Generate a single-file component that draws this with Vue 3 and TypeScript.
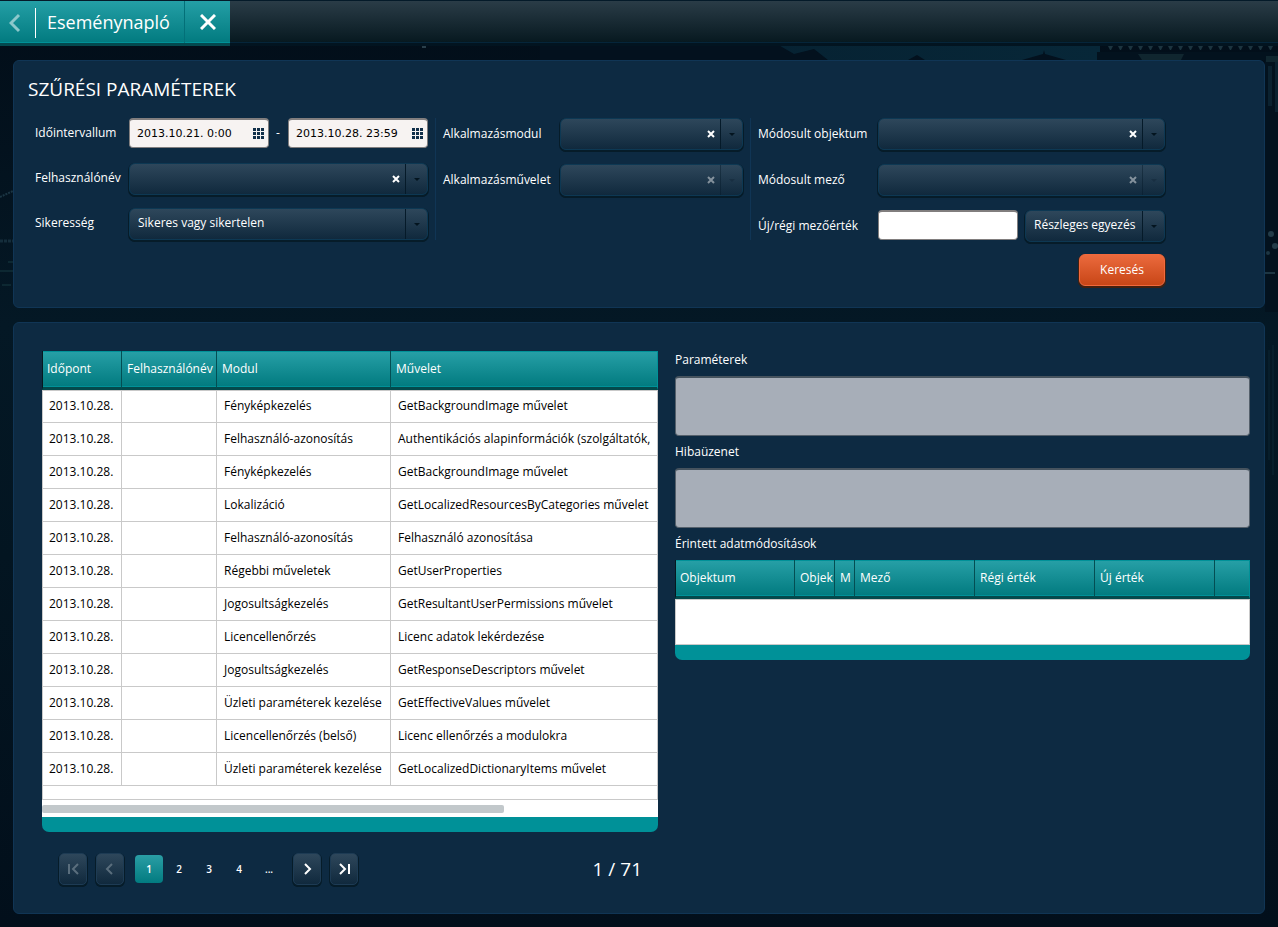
<script setup lang="ts">
import { ref } from 'vue'

interface LogEntry {
  time: string
  user: string
  module: string
  operation: string
}

const dateFrom = ref('2013.10.21. 0:00')
const dateTo = ref('2013.10.28. 23:59')
const user = ref('')
const success = ref('Sikeres vagy sikertelen')
const appModule = ref('')
const appOperation = ref('')
const changedObject = ref('')
const changedField = ref('')
const fieldValue = ref('')
const matchMode = ref('Részleges egyezés')
const parameters = ref('')
const errorMessage = ref('')

const day = '2013.10.28.'
const rows: LogEntry[] = [
  ['Fényképkezelés', 'GetBackgroundImage művelet'],
  ['Felhasználó-azonosítás', 'Authentikációs alapinformációk (szolgáltatók,'],
  ['Fényképkezelés', 'GetBackgroundImage művelet'],
  ['Lokalizáció', 'GetLocalizedResourcesByCategories művelet'],
  ['Felhasználó-azonosítás', 'Felhasználó azonosítása'],
  ['Régebbi műveletek', 'GetUserProperties'],
  ['Jogosultságkezelés', 'GetResultantUserPermissions művelet'],
  ['Licencellenőrzés', 'Licenc adatok lekérdezése'],
  ['Jogosultságkezelés', 'GetResponseDescriptors művelet'],
  ['Üzleti paraméterek kezelése', 'GetEffectiveValues művelet'],
  ['Licencellenőrzés (belső)', 'Licenc ellenőrzés a modulokra'],
  ['Üzleti paraméterek kezelése', 'GetLocalizedDictionaryItems művelet'],
].map(([module, operation]) => ({ time: day, user: '', module, operation }))

const changeColumns = ['Objektum', 'Objek', 'M', 'Mező', 'Régi érték', 'Új érték', '']
const pages = ['1', '2', '3', '4', '...']
const page = ref('1')
const pageCount = 71
const gridCells = [0, 4, 8]
const rafters = Array.from({ length: 18 }, (_, i) => 1108 + i * 10)
</script>

<template>
  <div class="app">
    <svg class="backdrop" width="1278" height="927" viewBox="0 0 1278 927" aria-hidden="true">
      <defs>
        <linearGradient id="sky" x1="0" x2="1" y1="0" y2="0">
          <stop offset="0" stop-color="#020d1a" />
          <stop offset="0.25" stop-color="#062131" />
          <stop offset="1" stop-color="#072738" />
        </linearGradient>
      </defs>
      <rect x="540" y="40" width="560" height="24" fill="url(#sky)" />
      <path d="M540 40h230l24 14 20-5 14 11H540zM908 60l9-5 8 5zM1022 60l14-4 7-2 1-4 1 4 7 2 14 4z" fill="#03111e" />
      <path d="M1097 52h181v260h-13V60H1097z" fill="#03121e" />
      <path d="M1138 54h46l-3 6h-39zM1266 56h12v6h-12z" fill="#10262f" />
      <path v-for="x in rafters" :key="x" :d="`M${x} 46h5l-2 4h-1z`" fill="#1c343f" />
      <path d="M1268 66h4v40h-4zM1275 62h3v50h-3z" fill="#0b2230" />
      <circle cx="1271" cy="234" r="3" fill="#233c49" />
      <circle cx="1275" cy="246" r="3" fill="#233c49" />
      <circle cx="1268" cy="253" r="2" fill="#1d3643" />
      <path d="M1265 273h10" stroke="#1d3643" stroke-width="2" />
      <path d="M0 197l13-6" stroke="#1b3543" stroke-width="2" stroke-dasharray="2 1" />
      <path d="M0 241h13" stroke="#142d3b" stroke-width="3" stroke-dasharray="3 1" />
      <path d="M8 262h5M0 271h13M2 285h9" stroke="#0d2832" stroke-width="2" />
      <path d="M422 47h4" stroke="#2a3f4b" stroke-width="2" />
      <path d="M1273 345v130M1269 350v110" stroke="#0c2634" />
    </svg>

    <header class="topbar">
      <div class="tab">
        <button class="back" type="button" aria-label="Vissza">
          <svg width="12" height="20" viewBox="0 0 12 20"><path d="M10 2 2 10l8 8" fill="none" stroke="#8cc8cb" stroke-width="3" /></svg>
        </button>
        <h1 class="title">Eseménynapló</h1>
        <button class="close" type="button" aria-label="Bezárás">
          <svg width="16" height="16" viewBox="0 0 16 16"><path d="m1 1 14 14M15 1 1 15" stroke="#fff" stroke-width="3" /></svg>
        </button>
      </div>
    </header>

    <main class="main">
      <form class="panel filters" @submit.prevent>
        <h2 class="heading">SZŰRÉSI PARAMÉTEREK</h2>
        <div class="groups">
          <div class="group first">
            <label class="label" for="from">Időintervallum</label>
            <div class="range">
              <span v-for="n in 2" :key="n" class="date" :class="{ second: n === 2 }">
                <input v-if="n === 1" id="from" v-model="dateFrom" class="box" type="text" />
                <input v-else v-model="dateTo" class="box" type="text" aria-label="Időintervallum vége" />
                <button class="calendar" type="button" aria-label="Naptár">
                  <svg width="11" height="11" viewBox="0 0 11 11" fill="#12304a">
                    <template v-for="y in gridCells" :key="y">
                      <rect v-for="x in gridCells" :key="x" :x="x" :y="y" width="3" height="3" />
                    </template>
                  </svg>
                </button>
              </span>
            </div>

            <label class="label" for="user">Felhasználónév</label>
            <div class="combo">
              <select id="user" v-model="user"><option value=""></option></select>
              <button class="clear" type="button" aria-label="Törlés" @click="user = ''">
                <svg width="8" height="8" viewBox="0 0 8 8"><path d="m1 1 6 6M7 1 1 7" /></svg>
              </button>
              <i class="arrow"></i>
            </div>

            <label class="label" for="success">Sikeresség</label>
            <div class="combo">
              <select id="success" v-model="success"><option>Sikeres vagy sikertelen</option></select>
              <i class="arrow"></i>
            </div>
          </div>

          <div class="group middle">
            <label class="label" for="module">Alkalmazásmodul</label>
            <div class="combo">
              <select id="module" v-model="appModule"><option value=""></option></select>
              <button class="clear" type="button" aria-label="Törlés" @click="appModule = ''">
                <svg width="8" height="8" viewBox="0 0 8 8"><path d="m1 1 6 6M7 1 1 7" /></svg>
              </button>
              <i class="arrow"></i>
            </div>
            <label class="label" for="operation">Alkalmazásművelet</label>
            <div class="combo off">
              <select id="operation" v-model="appOperation" disabled><option value=""></option></select>
              <button class="clear" type="button" aria-label="Törlés" disabled>
                <svg width="8" height="8" viewBox="0 0 8 8"><path d="m1 1 6 6M7 1 1 7" /></svg>
              </button>
              <i class="arrow"></i>
            </div>
          </div>

          <div class="group last">
            <label class="label" for="object">Módosult objektum</label>
            <div class="combo">
              <select id="object" v-model="changedObject"><option value=""></option></select>
              <button class="clear" type="button" aria-label="Törlés" @click="changedObject = ''">
                <svg width="8" height="8" viewBox="0 0 8 8"><path d="m1 1 6 6M7 1 1 7" /></svg>
              </button>
              <i class="arrow"></i>
            </div>
            <label class="label" for="field">Módosult mező</label>
            <div class="combo off">
              <select id="field" v-model="changedField" disabled><option value=""></option></select>
              <button class="clear" type="button" aria-label="Törlés" disabled>
                <svg width="8" height="8" viewBox="0 0 8 8"><path d="m1 1 6 6M7 1 1 7" /></svg>
              </button>
              <i class="arrow"></i>
            </div>
            <label class="label" for="value">Új/régi mezőérték</label>
            <div class="pair">
              <input id="value" v-model="fieldValue" class="box plain" type="text" />
              <div class="combo">
                <select v-model="matchMode" aria-label="Egyezés módja"><option>Részleges egyezés</option></select>
                <i class="arrow"></i>
              </div>
            </div>
            <button class="search" type="submit">Keresés</button>
          </div>
        </div>
      </form>

      <section class="panel results">
        <div class="log">
          <div class="frame">
            <table class="grid">
              <colgroup><col class="w-time" /><col class="w-user" /><col class="w-module" /><col /></colgroup>
              <thead>
                <tr><th>Időpont</th><th>Felhasználónév</th><th>Modul</th><th>Művelet</th></tr>
              </thead>
              <tbody>
                <tr v-for="(r, i) in rows" :key="i">
                  <td>{{ r.time }}</td><td>{{ r.user }}</td><td>{{ r.module }}</td><td>{{ r.operation }}</td>
                </tr>
              </tbody>
            </table>
            <div class="filler"></div>
            <div class="track"><div class="thumb"></div></div>
          </div>

          <nav class="pager" aria-label="Lapozó">
            <div class="steps">
              <button class="step" type="button" aria-label="Első oldal" disabled>
                <svg width="12" height="12" viewBox="0 0 12 12"><path d="M2 1v10M11 1 6 6l5 5" /></svg>
              </button>
              <button class="step" type="button" aria-label="Előző oldal" disabled>
                <svg width="12" height="12" viewBox="0 0 12 12"><path d="M8 1 3 6l5 5" /></svg>
              </button>
            </div>
            <div class="pages">
              <button v-for="p in pages" :key="p" class="page" :class="{ current: p === page }" type="button" @click="page = p">{{ p }}</button>
            </div>
            <div class="steps">
              <button class="step" type="button" aria-label="Következő oldal">
                <svg width="12" height="12" viewBox="0 0 12 12"><path d="m4 1 5 5-5 5" /></svg>
              </button>
              <button class="step" type="button" aria-label="Utolsó oldal">
                <svg width="12" height="12" viewBox="0 0 12 12"><path d="m2 1 5 5-5 5M11 1v10" /></svg>
              </button>
            </div>
            <span class="count">{{ page }} / {{ pageCount }}</span>
          </nav>
        </div>

        <div class="details">
          <label class="caption" for="params">Paraméterek</label>
          <textarea id="params" v-model="parameters" class="area" readonly></textarea>
          <label class="caption" for="error">Hibaüzenet</label>
          <textarea id="error" v-model="errorMessage" class="area" readonly></textarea>
          <div id="changes" class="caption">Érintett adatmódosítások</div>
          <div class="frame">
            <table class="grid" aria-labelledby="changes">
              <colgroup>
                <col class="w-wide" /><col class="w-short" /><col class="w-tiny" />
                <col class="w-wide" /><col class="w-wide" /><col class="w-wide" /><col />
              </colgroup>
              <thead>
                <tr><th v-for="(c, i) in changeColumns" :key="i">{{ c }}</th></tr>
              </thead>
            </table>
            <div class="empty"></div>
          </div>
        </div>
      </section>
    </main>
  </div>
</template>

<style>
html,
body {
  background: #020f1b;
}
</style>

<style scoped>
.app {
  position: relative;
  display: flex;
  flex-direction: column;
  min-height: 100vh;
  overflow: hidden;
  font: 12px/16px "Open Sans", "Noto Sans", sans-serif;
  color: #fff;
  background: linear-gradient(#020d18, #041825 35%, #031521 60%, #020f1b);
}
.app *,
.app *::before,
.app *::after {
  box-sizing: border-box;
}
.backdrop {
  position: absolute;
  top: 0;
  right: 0;
}
button,
input,
select,
textarea {
  margin: 0;
  padding: 0;
  border: 0;
  font: inherit;
  color: inherit;
  background: none;
}
button svg {
  display: block;
}

.topbar {
  position: relative;
  height: 46px;
  border-top: 1px solid #041a29;
  border-bottom: 3px solid #021420;
  background: linear-gradient(#2a3c47, #071920 41px, #05253a 41px);
}
.tab {
  display: flex;
  width: 230px;
  height: 45px;
  border-bottom: 3px solid #03494f;
  background: linear-gradient(#249fa6, #027b80 41px, #009198 41px);
}
.back {
  display: flex;
  align-items: center;
  width: 36px;
  height: 30px;
  margin-top: 7px;
  padding-left: 9px;
  border-right: 1px solid #fff;
}
.title {
  flex: 1;
  margin: 0;
  padding-left: 11px;
  font-size: 18px;
  font-weight: 400;
  line-height: 43px;
}
.close {
  display: flex;
  align-items: center;
  justify-content: center;
  width: 46px;
  border-left: 1px solid #037078;
}

.main {
  position: relative;
  display: flex;
  flex: 1;
  flex-direction: column;
  gap: 14px;
  padding: 14px 13px 13px;
}
.panel {
  border: 1px solid #103555;
  border-radius: 6px;
  background: #0d2a42;
}
.filters {
  padding: 14px 14px 21px;
}
.heading {
  margin: 0 0 15px;
  font-size: 19px;
  font-weight: 500;
  line-height: 28px;
}
.groups {
  display: flex;
  align-items: flex-start;
  padding-left: 7px;
}
.group {
  display: grid;
  align-items: start;
  row-gap: 14px;
  min-height: 122px;
}
.first {
  grid-template-columns: 94px 299px;
  row-gap: 13px;
  padding-right: 7px;
}
.middle {
  grid-template-columns: 117px 183px;
  grid-template-rows: 32px 32px;
  padding: 0 7px;
  border: solid #103555;
  border-width: 0 1px;
}
.last {
  grid-template-columns: 120px 287px;
  padding-left: 7px;
}
.label {
  line-height: 32px;
}
.first .label {
  line-height: 30px;
}
.range {
  display: flex;
  justify-content: space-between;
  height: 32px;
}
.date {
  position: relative;
  width: 140px;
}
.range .second::before {
  content: "-";
  position: absolute;
  left: -12px;
  line-height: 30px;
}
.box {
  width: 100%;
  height: 30px;
  padding: 0 28px 0 7px;
  border: 1px solid #817e7e;
  border-top-width: 2px;
  border-radius: 4px;
  color: #000;
  background: #f7f3f2;
  font: 11px/16px "DejaVu Sans", sans-serif;
}
.plain {
  width: 140px;
  padding-right: 7px;
  background: #fff;
}
.calendar {
  position: absolute;
  top: 10px;
  right: 5px;
}
.pair {
  display: flex;
  gap: 7px;
}
.pair .combo {
  flex: 1;
}
.combo {
  position: relative;
  height: 32px;
  border: 1px solid #0d3853;
  border-radius: 6px;
  background: linear-gradient(#2e475b, #10293d);
  box-shadow: 0 2px #061c29, 0 1px 0 1px #061c29;
}
.combo select {
  width: 100%;
  height: 29px;
  padding: 0 23px 2px 8px;
  appearance: none;
  outline: none;
  opacity: 1;
}
.combo option {
  color: #000;
}
.clear {
  position: absolute;
  top: 11px;
  right: 27px;
}
.clear path {
  stroke: #fff;
  stroke-width: 2;
}
.arrow {
  position: absolute;
  top: 0;
  right: 0;
  width: 22px;
  height: 30px;
  border-left: 1px solid #051a29;
  pointer-events: none;
}
.arrow::before {
  content: "";
  position: absolute;
  top: 14px;
  left: 8px;
  border: solid transparent;
  border-width: 3px 3px 0;
  border-top-color: #03141f;
}
.off .clear,
.off .arrow {
  opacity: 0.45;
}
.off .arrow::before {
  opacity: 0.5;
}
.search {
  grid-column: 2;
  justify-self: end;
  width: 86px;
  height: 32px;
  margin-top: -2px;
  border: 1px solid #f2693c;
  border-radius: 6px;
  background: linear-gradient(#eb6a3d, #c84617);
  box-shadow: 0 2px #43200f, 0 1px 0 1px #43200f;
}

.results {
  display: grid;
  flex: 1;
  grid-template-columns: 616fr 575fr;
  gap: 17px;
  align-items: start;
  padding: 21px 14px 27px 28px;
}
.log {
  padding-top: 7px;
}
.frame {
  overflow: hidden;
  border-bottom: 15px solid #009198;
  border-radius: 0 0 7px 7px;
  background: #fff;
}
.grid {
  width: 100%;
  table-layout: fixed;
  border-spacing: 0;
}
.w-time { width: 80px; }
.w-user { width: 95px; }
.w-module { width: 174px; }
.w-wide { width: 120px; }
.w-short { width: 40px; }
.w-tiny { width: 20px; }
.grid th,
.grid td {
  overflow: hidden;
  padding: 0;
  white-space: nowrap;
  text-align: left;
}
.grid th {
  height: 39px;
  padding: 0 0 1px 5px;
  border-right: 1px solid #034e53;
  border-bottom: 3px solid #03494c;
  font-weight: 400;
  background: linear-gradient(#009198 1px, #269fa6 1px, #027b80 35px, #009198 35px);
}
.grid th:first-child {
  border-left: 1px solid #06181f;
  padding-left: 4px;
}
.grid th:last-child {
  border-right-color: #009198;
}
.grid td {
  height: 33px;
  padding: 0 0 1px 7px;
  border: solid #c9c9c9;
  border-width: 0 1px 1px 0;
  color: #000;
}
.grid tbody tr:first-child td {
  border-top-width: 1px;
}
.grid td:first-child {
  border-left-width: 1px;
  padding-left: 6px;
}
.filler {
  height: 14px;
  border: solid #c9c9c9;
  border-width: 0 1px 1px;
}
.track {
  height: 17px;
  padding-top: 5px;
}
.thumb {
  width: 75%;
  height: 8px;
  border-radius: 2px;
  background: #c2c8cb;
}
.empty {
  height: 46px;
  border: 1px solid #c9c9c9;
}

.pager {
  display: flex;
  align-items: center;
  height: 34px;
  margin-top: 20px;
  padding: 0 16px 0 17px;
}
.steps {
  display: flex;
  gap: 9px;
}
.step {
  display: flex;
  align-items: center;
  justify-content: center;
  width: 28px;
  height: 32px;
  border: 1px solid #1d3b54;
  border-radius: 5px;
  background: linear-gradient(#2e475b, #10293d);
  box-shadow: 0 2px #061c29, 0 1px 0 1px #061c29;
}
.step path {
  fill: none;
  stroke: #fff;
  stroke-width: 2;
}
.step:disabled path {
  stroke: #5a6e7d;
}
.pages {
  display: flex;
  gap: 2px;
  margin: 0 10px 0 11px;
}
.page {
  width: 28px;
  height: 28px;
  border-radius: 4px;
  font-size: 10px;
  font-weight: 600;
}
.current {
  background: linear-gradient(#2a9ea5, #027b80);
}
.count {
  margin-left: auto;
  font-size: 19px;
  line-height: 28px;
}

.caption {
  display: block;
  height: 32px;
  line-height: 32px;
}
.area {
  display: block;
  width: 100%;
  height: 60px;
  resize: none;
  border: 1px solid #55606b;
  border-top: 2px solid #46535e;
  border-radius: 4px;
  background: #a7aeb8;
}
</style>
